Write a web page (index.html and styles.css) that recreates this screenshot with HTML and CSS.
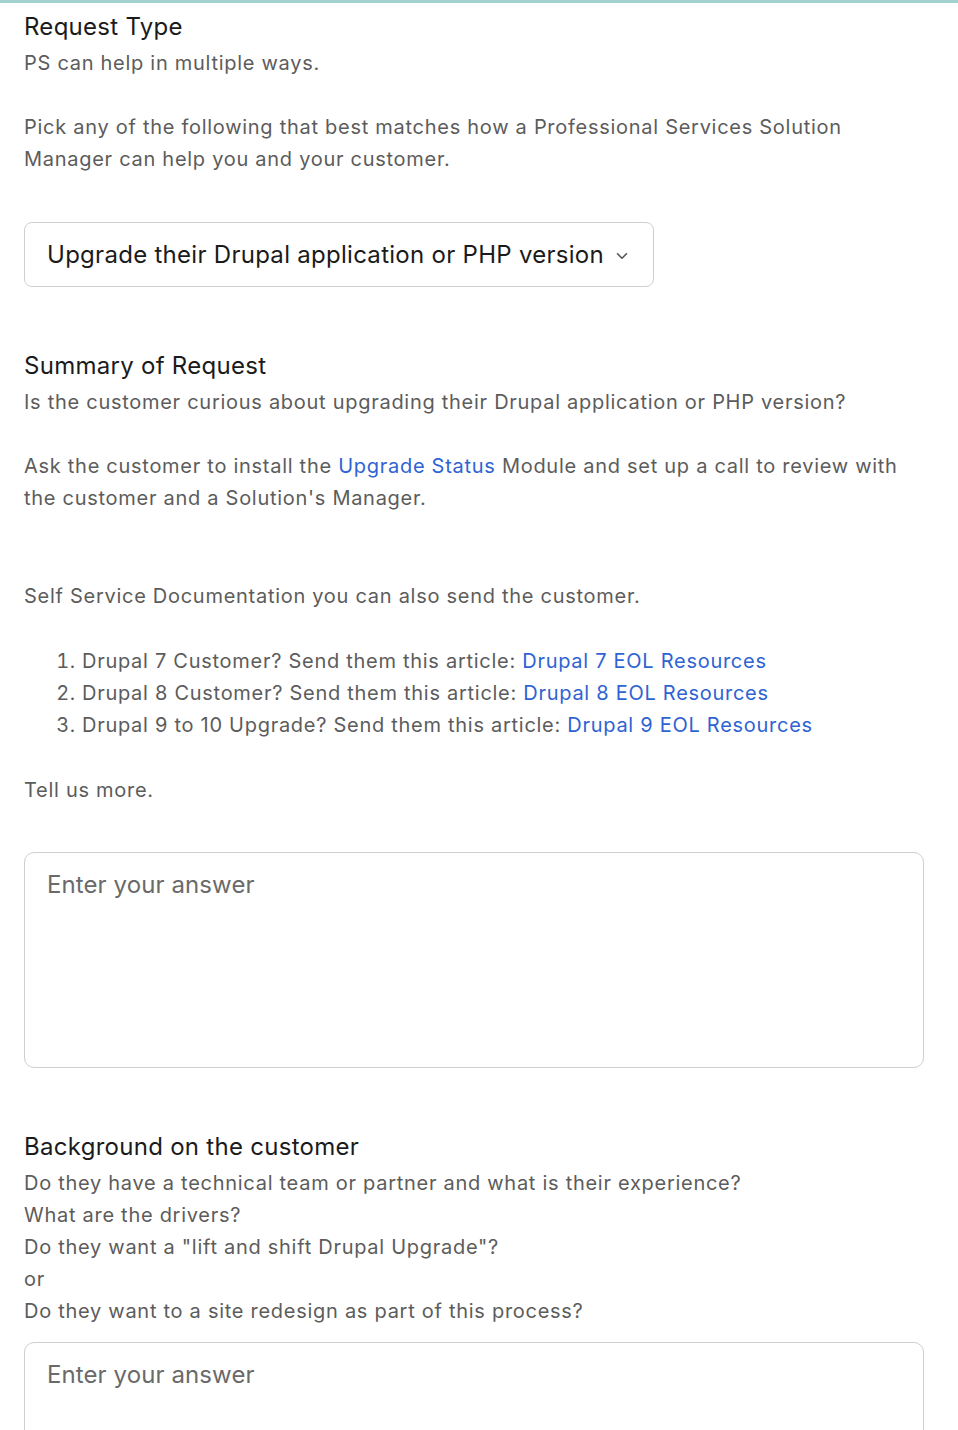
FILE: index.html
```html
<!DOCTYPE html>
<html lang="en">
<head>
<meta charset="utf-8">
<title>Request</title>
<link rel="stylesheet" href="styles.css">
</head>
<body>
<div class="topbar"></div>
<main class="form">
  <section class="question">
    <h2 class="q-title">Request Type</h2>
    <div class="q-desc">
      <p>PS can help in multiple ways.</p>
      <p class="gap">Pick any of the following that best matches how a Professional Services Solution Manager can help you and your customer.</p>
    </div>
    <div class="select">
      <span>Upgrade their Drupal application or PHP version</span>
      <svg class="chev" width="12" height="8" viewBox="0 0 12 8" aria-hidden="true"><path d="M1.5 1.8 L6 6.2 L10.5 1.8" fill="none" stroke="#555" stroke-width="1.6" stroke-linecap="round" stroke-linejoin="round"/></svg>
    </div>
  </section>

  <section class="question">
    <h2 class="q-title">Summary of Request</h2>
    <div class="q-desc">
      <p>Is the customer curious about upgrading their Drupal application or PHP version?</p>
      <p class="gap">Ask the customer to install the <a href="#">Upgrade Status</a> Module and set up a call to review with the customer and a Solution's Manager.</p>
      <p class="gap2">Self Service Documentation you can also send the customer.</p>
      <ol class="list">
        <li>Drupal 7 Customer? Send them this article: <a href="#">Drupal 7 EOL Resources</a></li>
        <li>Drupal 8 Customer? Send them this article: <a href="#">Drupal 8 EOL Resources</a></li>
        <li>Drupal 9 to 10 Upgrade? Send them this article: <a href="#">Drupal 9 EOL Resources</a></li>
      </ol>
      <p class="gap-lg">Tell us more.</p>
    </div>
    <div class="answer">Enter your answer</div>
  </section>

  <section class="question">
    <h2 class="q-title">Background on the customer</h2>
    <div class="q-desc">
      <p>Do they have a technical team or partner and what is their experience?<br>What are the drivers?<br>Do they want a "lift and shift Drupal Upgrade"?<br>or<br>Do they want to a site redesign as part of this process?</p>
    </div>
    <div class="answer tight">Enter your answer</div>
  </section>
</main>
</body>
</html>
```
FILE: styles.css
```css
* { box-sizing: border-box; }
html, body { margin: 0; padding: 0; background: #fff; }
body {
  font-family: Inter, "Noto Sans", "Liberation Sans", sans-serif;
  color: #5c5c5c;
  overflow: hidden;
}
.topbar { height: 3px; background: #a3d1d2; }
.form { padding: 6px 34px 0 24px; }
.question { margin-bottom: 61px; }
.q-title {
  margin: 0;
  font-size: 24px;
  line-height: 36px;
  font-weight: 400;
  letter-spacing: 0.28px;
  color: #1b1b1b;
}
.q-desc {
  font-size: 20px;
  line-height: 32px;
  letter-spacing: 0.72px;
  margin-top: 2px;
}
.q-desc p { margin: 0; }
.q-desc .gap { margin-top: 32px; }
.q-desc .gap-lg { margin-top: 33px; }
.q-desc .gap2 { margin-top: 66px; }
.q-desc .list { margin: 33px 0 0; padding-left: 58px; }
.q-desc a { color: #2f63d3; text-decoration: none; }
.select {
  margin-top: 47px;
  width: 630px;
  height: 65px;
  border: 1px solid #cfcfcf;
  border-radius: 8px;
  padding: 0 22px;
  display: flex;
  align-items: center;
  gap: 12px;
  font-size: 24px;
  letter-spacing: 0.28px;
  color: #1b1b1b;
}
.chev { flex: none; margin-top: 2px; }
.answer {
  margin-top: 46px;
  height: 216px;
  border: 1px solid #cfcfcf;
  border-radius: 10px;
  padding: 16px 22px;
  font-size: 24px;
  line-height: 32px;
  letter-spacing: 0.1px;
  color: #6a6a6a;
}
.answer.tight { margin-top: 15px; }
```
